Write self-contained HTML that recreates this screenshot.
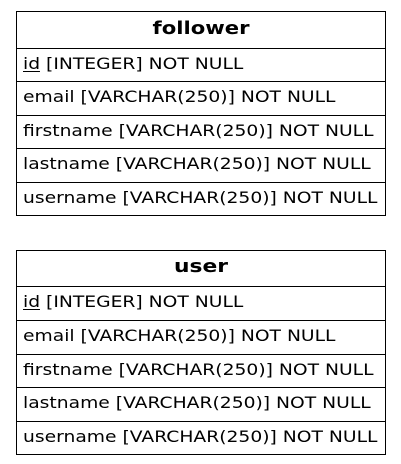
<!DOCTYPE html>
<html><head><meta charset="utf-8"><style>
html,body{margin:0;padding:0;background:#fff;width:401px;height:464px;overflow:hidden}
svg text{font-family:"DejaVu Sans","Liberation Sans",sans-serif;font-size:16px;fill:#000}
</style></head><body>
<svg width="401" height="464" xmlns="http://www.w3.org/2000/svg">
<g stroke="#000" stroke-width="1" fill="none">
<rect x="16.5" y="11.5" width="369" height="204"/>
<line x1="16" y1="48.5" x2="386" y2="48.5"/>
<line x1="16" y1="81.5" x2="386" y2="81.5"/>
<line x1="16" y1="115.5" x2="386" y2="115.5"/>
<line x1="16" y1="148.5" x2="386" y2="148.5"/>
<line x1="16" y1="182.5" x2="386" y2="182.5"/>
<rect x="16.5" y="250.5" width="369" height="204"/>
<line x1="16" y1="286.5" x2="386" y2="286.5"/>
<line x1="16" y1="320.5" x2="386" y2="320.5"/>
<line x1="16" y1="354.5" x2="386" y2="354.5"/>
<line x1="16" y1="387.5" x2="386" y2="387.5"/>
<line x1="16" y1="421.5" x2="386" y2="421.5"/>
</g>
<text x="201" y="34" text-anchor="middle" font-weight="bold" textLength="97" lengthAdjust="spacingAndGlyphs" style="font-size:18px">follower</text>
<text x="201" y="272" text-anchor="middle" font-weight="bold" textLength="54" lengthAdjust="spacingAndGlyphs" style="font-size:18px">user</text>
<g transform="translate(23,0) scale(1.17,1) translate(-23,0)">
<text x="23" y="69">id [INTEGER] NOT NULL</text>
<text x="23" y="102">email [VARCHAR(250)] NOT NULL</text>
<text x="23" y="136">firstname [VARCHAR(250)] NOT NULL</text>
<text x="23" y="169">lastname [VARCHAR(250)] NOT NULL</text>
<text x="23" y="203">username [VARCHAR(250)] NOT NULL</text>
<text x="23" y="307">id [INTEGER] NOT NULL</text>
<text x="23" y="341">email [VARCHAR(250)] NOT NULL</text>
<text x="23" y="375">firstname [VARCHAR(250)] NOT NULL</text>
<text x="23" y="408">lastname [VARCHAR(250)] NOT NULL</text>
<text x="23" y="442">username [VARCHAR(250)] NOT NULL</text>
<line x1="23" y1="71.5" x2="37.5" y2="71.5" stroke="#000" stroke-width="1"/>
<line x1="23" y1="309.5" x2="37.5" y2="309.5" stroke="#000" stroke-width="1"/>
</g>
</svg>
</body></html>
